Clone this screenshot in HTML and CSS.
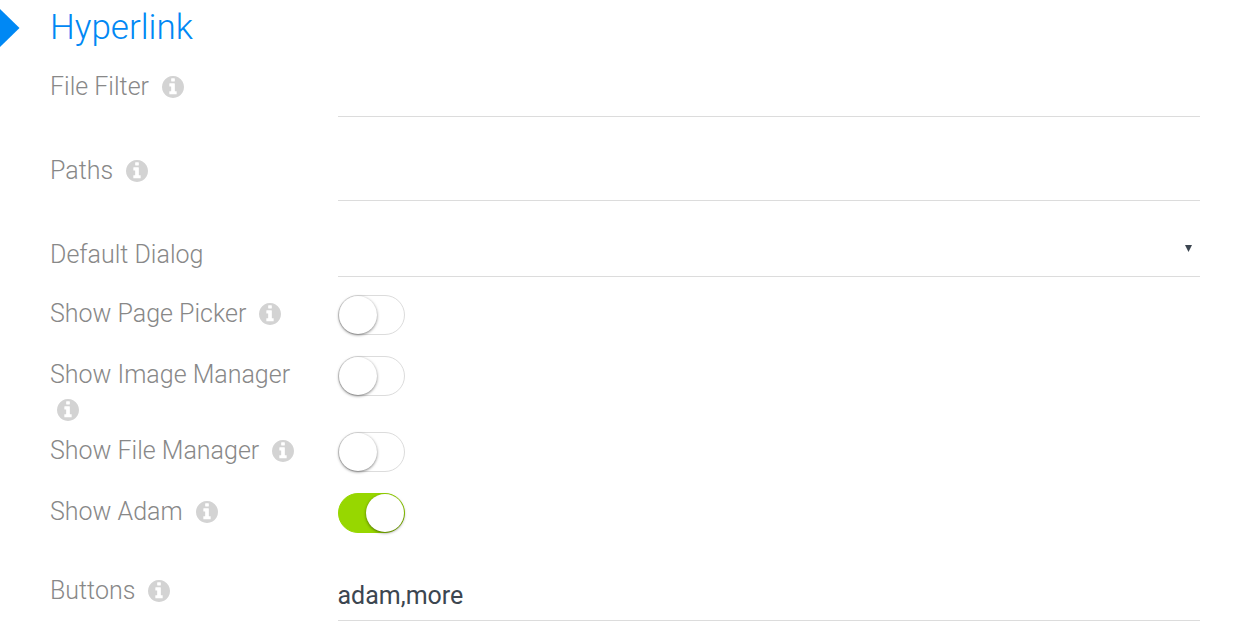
FILE: index.html
```html
<!DOCTYPE html>
<html lang="en">
<head>
<meta charset="utf-8">
<meta name="viewport" content="width=device-width, initial-scale=1">
<title>Hyperlink</title>
<link rel="stylesheet" href="styles.css">
</head>
<body>
<svg class="sprite" aria-hidden="true">
  <symbol id="info" viewBox="0 128 1536 1536">
    <path d="M1024 1376v-160q0-14-9-23t-23-9h-96v-512q0-14-9-23t-23-9h-320q-14 0-23 9t-9 23v160q0 14 9 23t23 9h96v320h-96q-14 0-23 9t-9 23v160q0 14 9 23t23 9h448q14 0 23-9t9-23zm-128-896v-160q0-14-9-23t-23-9h-192q-14 0-23 9t-9 23v160q0 14 9 23t23 9h192q14 0 23-9t9-23zm640 416q0 209-103 385.500t-279.500 279.500-385.500 103-385.500-103-279.500-279.500-103-385.500 103-385.500 279.500-279.500 385.500-103 385.500 103 279.500 279.500 103 385.500z"/>
  </symbol>
</svg>
<main class="panel">
  <header class="panel-header">
    <svg class="marker" viewBox="0 0 20 38" aria-hidden="true"><path d="M0 0L19.500 19L0 38z"/></svg>
    <h1 class="title">Hyperlink</h1>
  </header>
  <form class="settings">
    <div class="row row-text">
      <div class="caption"><label for="file-filter">File Filter</label> <svg class="info"><use href="#info"/></svg></div>
      <input class="field" id="file-filter" type="text">
    </div>
    <div class="row row-text">
      <div class="caption"><label for="paths">Paths</label> <svg class="info"><use href="#info"/></svg></div>
      <input class="field" id="paths" type="text">
    </div>
    <div class="row row-select">
      <div class="caption"><label for="dialog">Default Dialog</label></div>
      <div class="select-wrap">
        <select class="field field-select" id="dialog"><option></option></select>
        <svg class="caret" viewBox="0 0 8 8" aria-hidden="true"><path d="M0 0h8L4 8z"/></svg>
      </div>
    </div>
    <div class="row">
      <div class="caption"><label for="page-picker">Show Page Picker</label> <svg class="info"><use href="#info"/></svg></div>
      <input class="toggle" id="page-picker" type="checkbox">
    </div>
    <div class="row">
      <div class="caption"><label for="image-manager">Show Image Manager</label> <svg class="info"><use href="#info"/></svg></div>
      <input class="toggle" id="image-manager" type="checkbox">
    </div>
    <div class="row">
      <div class="caption"><label for="file-manager">Show File Manager</label> <svg class="info"><use href="#info"/></svg></div>
      <input class="toggle" id="file-manager" type="checkbox">
    </div>
    <div class="row row-last-toggle">
      <div class="caption"><label for="adam">Show Adam</label> <svg class="info"><use href="#info"/></svg></div>
      <input class="toggle" id="adam" type="checkbox" checked>
    </div>
    <div class="row">
      <div class="caption"><label for="buttons">Buttons</label> <svg class="info"><use href="#info"/></svg></div>
      <input class="field" id="buttons" type="text" value="adam,more">
    </div>
  </form>
</main>
</body>
</html>
```
FILE: styles.css
```css
* {
  box-sizing: border-box;
}

body {
  margin: 0;
  background: #fff;
  color: #3c4650;
  font-family: Roboto, "Open Sans", sans-serif;
  font-size: 25px;
}

.sprite {
  position: absolute;
  width: 0;
  height: 0;
}

.panel-header {
  display: flex;
  align-items: center;
  gap: 30px;
  padding: 3px 0 15px;
}

.marker {
  width: 20px;
  height: 38px;
  fill: #0088f4;
}

.title {
  margin: 0;
  color: #0088f4;
  font-size: 35px;
  font-weight: 300;
  line-height: 50px;
}

.settings {
  padding: 0 46px 0 50px;
}

.row {
  display: grid;
  grid-template-columns: 1fr 3fr;
  align-items: start;
  min-height: 61px;
  padding-bottom: 5px;
}

.row-text {
  min-height: 84px;
}

.row-select {
  min-height: 59px;
}

.row-last-toggle {
  min-height: 79px;
}

.caption {
  padding: 1px 36px 0 0;
  color: #888;
  font-weight: 300;
  line-height: 35px;
}

.info {
  display: inline-block;
  width: 22px;
  height: 22px;
  margin-left: 7px;
  vertical-align: -3px;
  fill: #d3d3d3;
}

.field {
  display: block;
  width: 100%;
  height: 49px;
  padding: 0 0 2px;
  border: 0;
  border-bottom: 1px solid #dcdcdc;
  border-radius: 0;
  outline: 0;
  background: transparent;
  color: inherit;
  font: inherit;
}

.select-wrap {
  position: relative;
}

.field-select {
  height: 41px;
  appearance: none;
}

.caret {
  position: absolute;
  top: 9px;
  right: 8px;
  width: 7px;
  height: 7px;
  fill: #3c4650;
  pointer-events: none;
}

.toggle {
  display: flex;
  width: 67px;
  height: 40px;
  margin: 0;
  border: 1px solid #dcdcdc;
  border-radius: 20px;
  background: #fff;
  appearance: none;
}

.toggle::before {
  content: "";
  width: 38px;
  height: 38px;
  border-radius: 50%;
  background: #fff;
  box-shadow: 0 1px 3px rgba(0, 0, 0, 0.5);
}

.toggle:checked {
  justify-content: flex-end;
  border-color: #97d700;
  background: #97d700;
}
```
